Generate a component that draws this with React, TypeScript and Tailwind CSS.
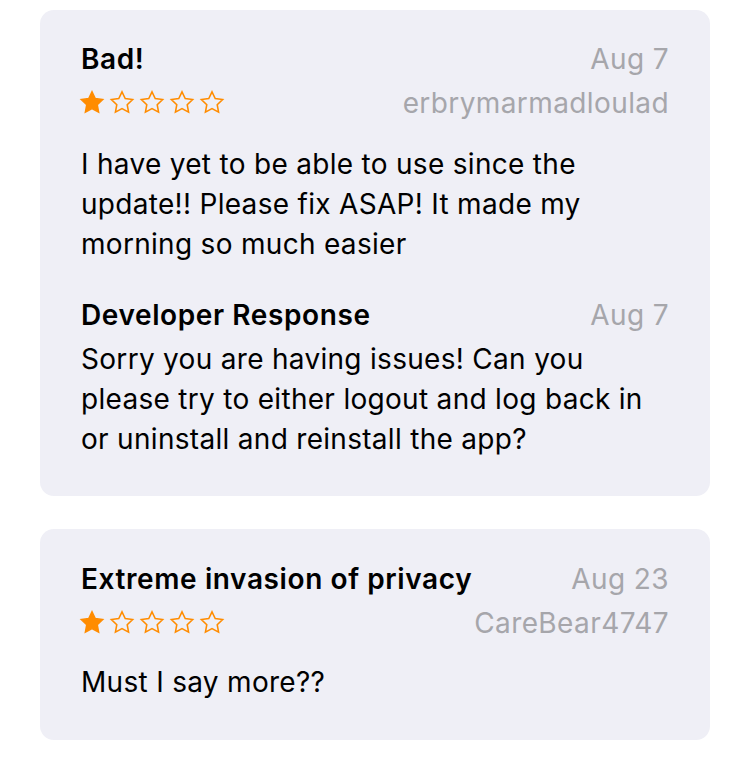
import React from "react";

const font = { fontFamily: "Inter, 'Noto Sans', sans-serif" };

function Star({ filled }: { filled: boolean }) {
  return (
    <svg width="26" height="25" viewBox="0 0 24 24" className="block">
      <polygon
        points="12,1.8 15.1,8.3 22.2,9.2 17,14.1 18.3,21.2 12,17.8 5.7,21.2 7,14.1 1.8,9.2 8.9,8.3"
        fill={filled ? "#ff8c00" : "none"}
        stroke="#ff8c00"
        strokeWidth="1.5"
        strokeLinejoin="miter"
      />
    </svg>
  );
}

function Stars({ n }: { n: number }) {
  return (
    <div className="flex gap-[4px] items-center -ml-[2px] -mt-[2px]">
      {[0, 1, 2, 3, 4].map((i) => (
        <Star key={i} filled={i < n} />
      ))}
    </div>
  );
}

function Header({ title, date, user }: { title: string; date: string; user: string }) {
  return (
    <>
      <div className="flex justify-between items-center h-[44px]">
        <div className="text-[28px] font-semibold text-black tracking-[0.6px]">{title}</div>
        <div className="text-[28px] text-[#a6a6ab] tracking-[0.4px]">{date}</div>
      </div>
      <div className="flex justify-between items-center h-[44px]">
        <Stars n={1} />
        <div className="text-[28px] text-[#a6a6ab] tracking-[0.4px]">{user}</div>
      </div>
    </>
  );
}

export default function App() {
  return (
    <div className="bg-white w-[750px] h-[765px] px-[40px] pt-[10px] flex flex-col gap-[33px]" style={font}>
      <div className="bg-[#efeff6] rounded-[14px] px-[41px] pt-[27px] pb-[37px]">
        <Header title="Bad!" date="Aug 7" user="erbrymarmadloulad" />
        <div className="mt-[19px] text-[28px] leading-[40px] text-black tracking-[0.3px]">
          I have yet to be able to use since the
          <br />
          update!! Please fix ASAP! It made my
          <br />
          morning so much easier
        </div>
        <div className="mt-[29px] flex justify-between items-center h-[44px]">
          <div className="text-[28px] font-semibold text-black tracking-[0.6px]">Developer Response</div>
          <div className="text-[28px] text-[#a6a6ab] tracking-[0.4px]">Aug 7</div>
        </div>
        <div className="mt-[2px] text-[28px] leading-[40px] text-black tracking-[0.3px]">
          Sorry you are having issues! Can you
          <br />
          please try to either logout and log back in
          <br />
          or uninstall and reinstall the app?
        </div>
      </div>
      <div className="bg-[#efeff6] rounded-[14px] px-[41px] pt-[28px] pb-[38px]">
        <Header title="Extreme invasion of privacy" date="Aug 23" user="CareBear4747" />
        <div className="mt-[17px] text-[28px] leading-[40px] text-black tracking-[0.3px]">
          Must I say more??
        </div>
      </div>
    </div>
  );
}
